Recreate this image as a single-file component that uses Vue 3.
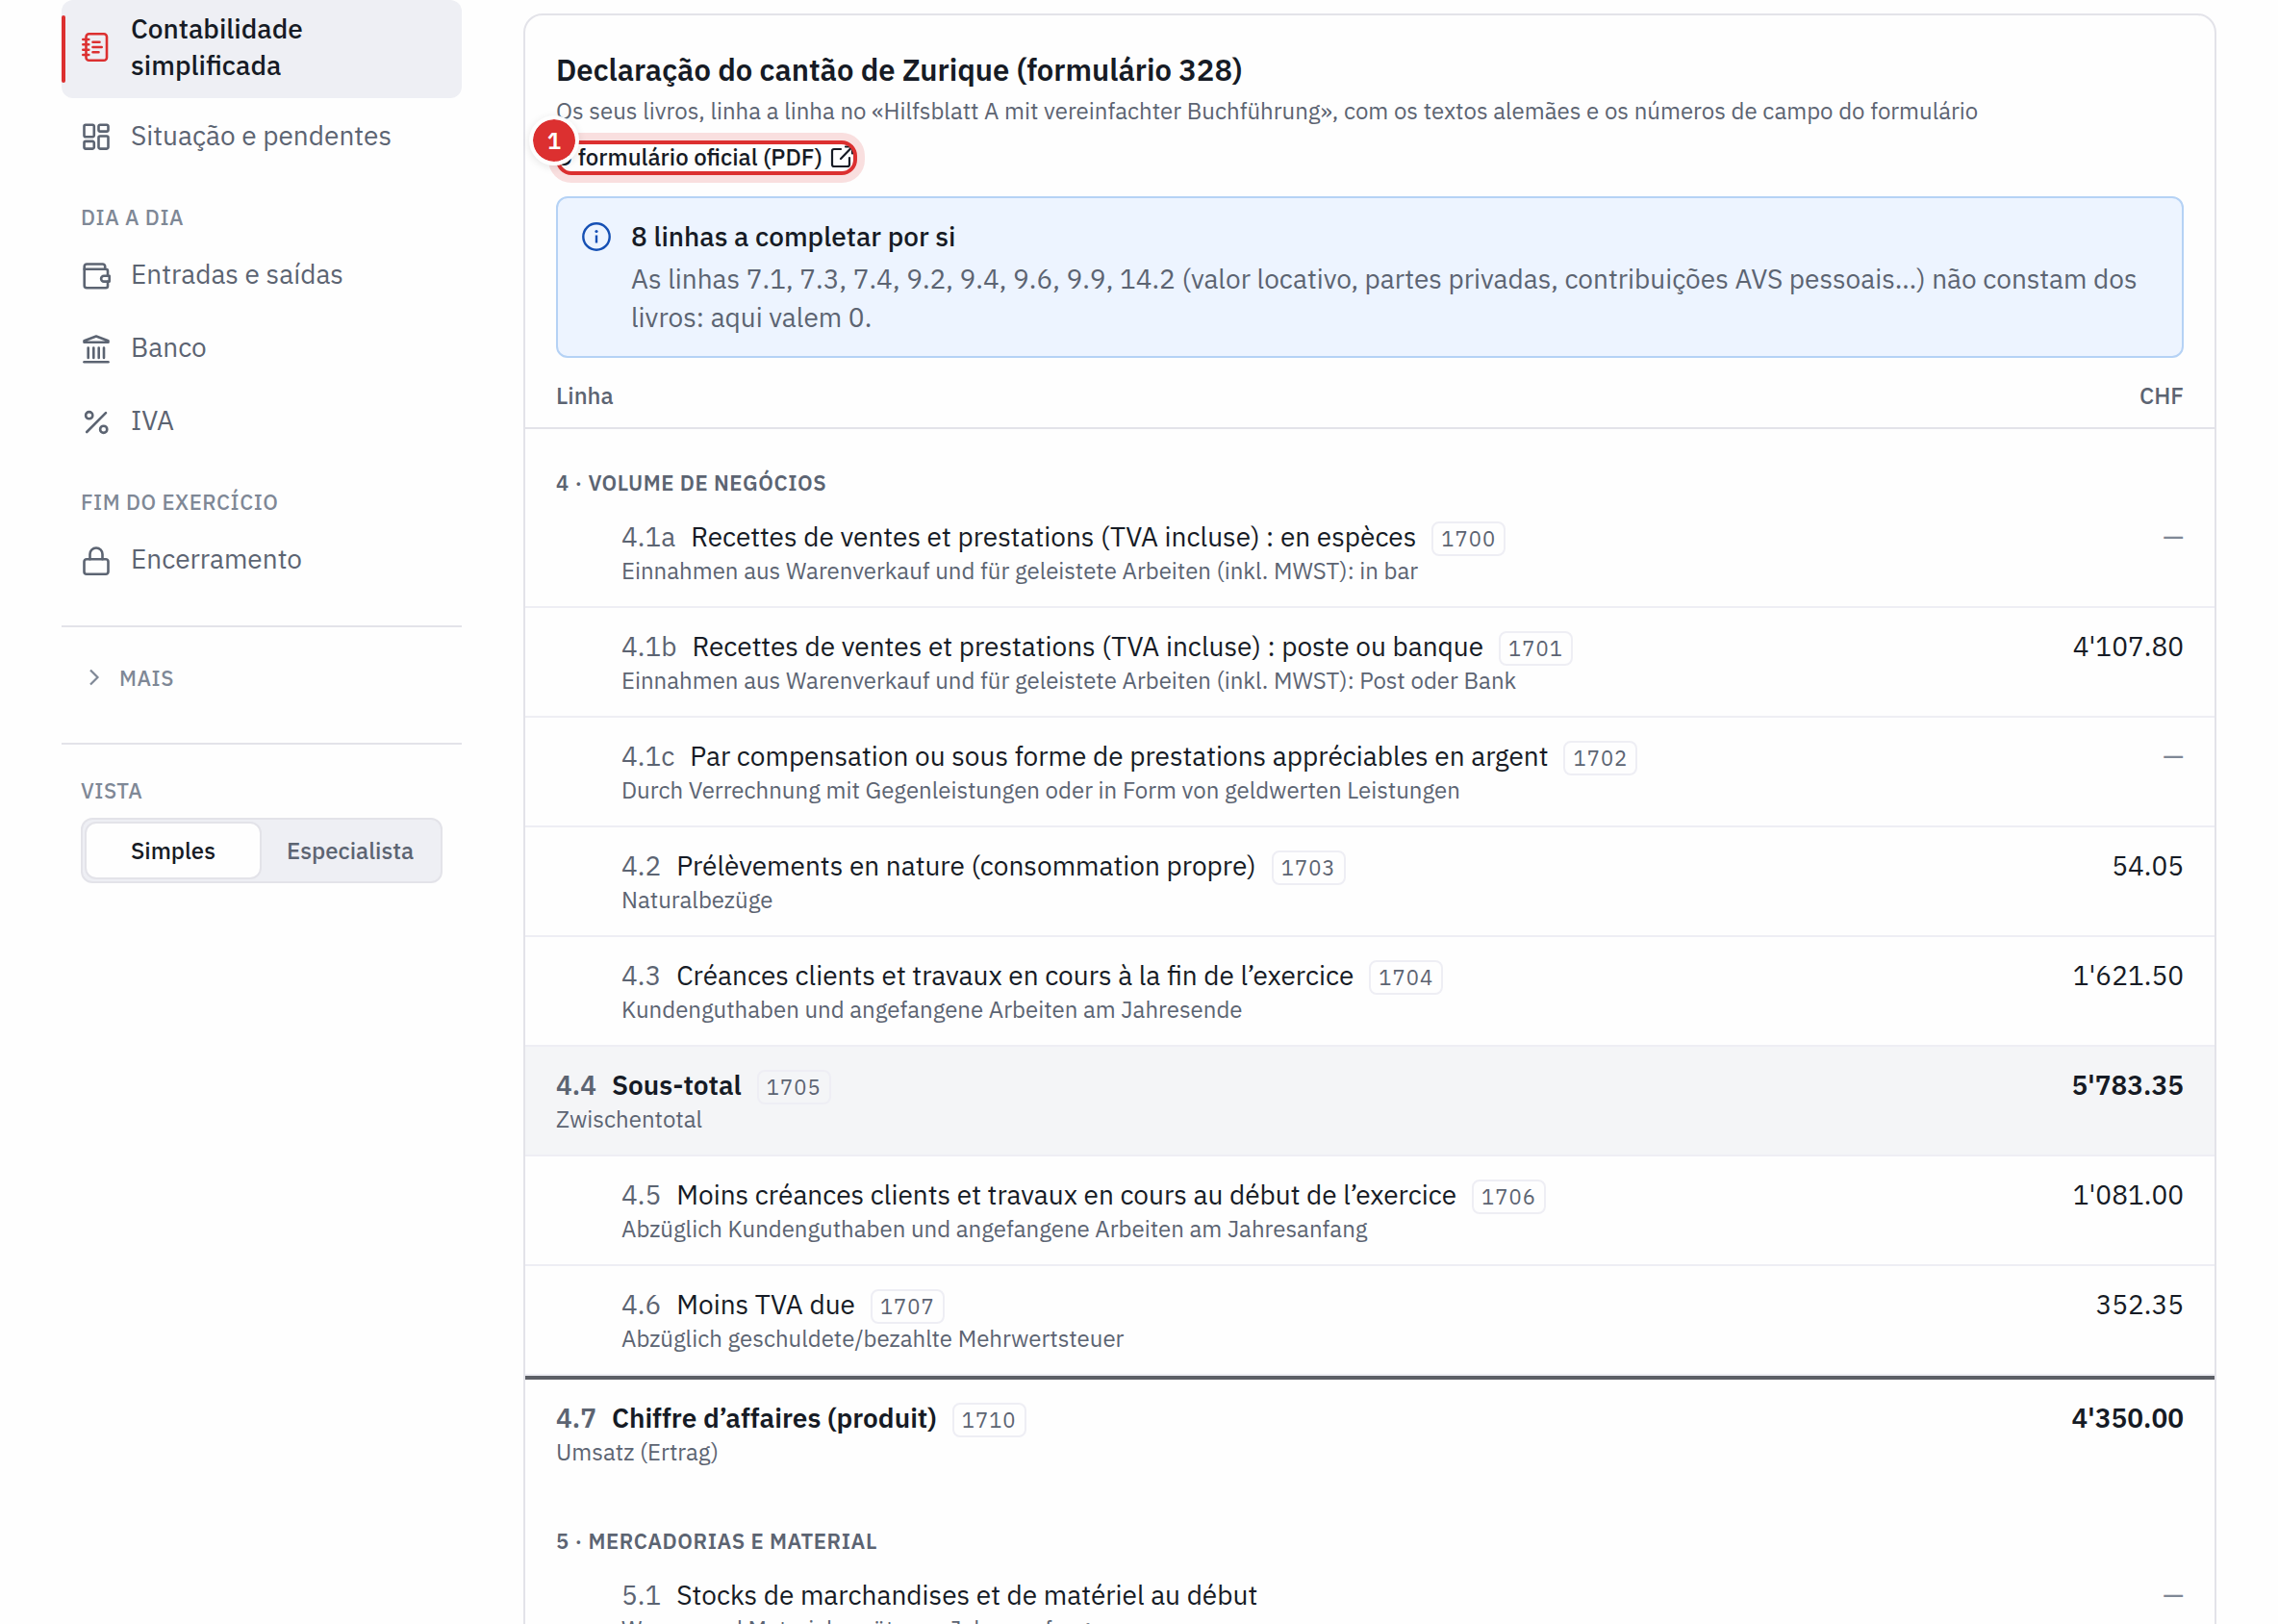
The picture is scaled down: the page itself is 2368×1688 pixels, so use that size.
<template>
  <div class="page">
    <aside class="sidebar">
      <nav class="nav">
        <template v-for="group in groups" :key="group.title">
          <h2 v-if="group.title" class="nav-title">{{ group.title }}</h2>
          <a
            v-for="item in group.items"
            :key="item.label"
            href="#"
            class="nav-item"
            :class="{ active: item.label === current }"
            @click.prevent="current = item.label"
          >
            <svg class="nav-icon" viewBox="0 0 32 32" aria-hidden="true">
              <path v-for="d in icons[item.icon]" :key="d" :d="d" />
            </svg>
            <span class="nav-label">{{ item.label }}</span>
          </a>
        </template>
      </nav>

      <div class="more">
        <button class="more-btn" type="button">
          <svg class="chevron" viewBox="0 0 20 20" aria-hidden="true">
            <path d="M6 2.5 13.5 10 6 17.5" />
          </svg>
          Mais
        </button>
      </div>

      <div class="view">
        <h2 id="view-title" class="view-title">Vista</h2>
        <div class="segmented" role="group" aria-labelledby="view-title">
          <button
            v-for="mode in modes"
            :key="mode"
            type="button"
            class="segment"
            :class="{ selected: mode === view }"
            :aria-pressed="mode === view"
            @click="view = mode"
          >
            {{ mode }}
          </button>
        </div>
      </div>
    </aside>

    <main class="card">
      <header class="card-head">
        <h1 class="title">Declaração do cantão de Zurique (formulário 328)</h1>
        <p class="subtitle">
          Os seus livros, linha a linha no «Hilfsblatt A mit vereinfachter Buchführung», com os textos alemães e os
          números de campo do formulário
        </p>
        <a class="official" href="#">
          O formulário oficial (PDF)
          <svg class="external" viewBox="0 0 24 24" aria-hidden="true">
            <path d="M11 4H4a2 2 0 0 0-2 2v14a2 2 0 0 0 2 2h14a2 2 0 0 0 2-2v-7M11 14 23 1.5M16 1.5h7v7" />
          </svg>
          <span class="ring"></span>
          <span class="step">1</span>
        </a>

        <section class="notice">
          <svg class="info" viewBox="0 0 32 32" aria-hidden="true">
            <circle cx="16" cy="16" r="13.7" />
            <path d="M16 14.5v8" />
            <circle class="dot" cx="16" cy="10.5" r="1.6" />
          </svg>
          <div>
            <h2 class="notice-title">8 linhas a completar por si</h2>
            <p class="notice-text">
              As linhas 7.1, 7.3, 7.4, 9.2, 9.4, 9.6, 9.9, 14.2 (valor locativo, partes privadas, contribuições AVS
              pessoais…) não constam dos livros: aqui valem 0.
            </p>
          </div>
        </section>
      </header>

      <table class="lines">
        <thead>
          <tr>
            <th scope="col">Linha</th>
            <th scope="col" class="amount">CHF</th>
          </tr>
        </thead>
        <tbody v-for="section in sections" :key="section.title">
          <tr class="section">
            <th colspan="2" scope="colgroup">{{ section.title }}</th>
          </tr>
          <tr v-for="line in section.lines" :key="line.no" class="line" :class="line.kind">
            <td>
              <div class="label">
                <span class="no">{{ line.no }}</span>
                <span>{{ line.label }}</span>
                <span v-if="line.code" class="code">{{ line.code }}</span>
              </div>
              <div class="german">{{ line.german }}</div>
            </td>
            <td class="amount" :class="{ empty: !line.amount }">{{ line.amount || "—" }}</td>
          </tr>
        </tbody>
      </table>
    </main>
  </div>
</template>

<script setup>
import { ref } from "vue";

const current = ref("Contabilidade simplificada");
const view = ref("Simples");
const modes = ["Simples", "Especialista"];

const groups = [
  {
    title: "",
    items: [
      { label: "Contabilidade simplificada", icon: "notebook" },
      { label: "Situação e pendentes", icon: "grid" },
    ],
  },
  {
    title: "Dia a dia",
    items: [
      { label: "Entradas e saídas", icon: "wallet" },
      { label: "Banco", icon: "bank" },
      { label: "IVA", icon: "percent" },
    ],
  },
  {
    title: "Fim do exercício",
    items: [{ label: "Encerramento", icon: "lock" }],
  },
];

const icons = {
  notebook: [
    "M8.5 1.2H24a3 3 0 0 1 3 3v21.6a3 3 0 0 1-3 3H8.5a3 3 0 0 1-3-3V4.2a3 3 0 0 1 3-3z",
    "M2.3 7h6M2.3 12.3h6M2.3 17.7h6M2.3 23h6",
    "M12.5 9.7h7M12.5 15h9.2M12.5 20.3h6",
  ],
  grid: [
    "M5 3.8h7.3a1.5 1.5 0 0 1 1.5 1.5v9.4a1.5 1.5 0 0 1-1.5 1.5H5a1.5 1.5 0 0 1-1.5-1.5V5.3A1.5 1.5 0 0 1 5 3.8z",
    "M20 3.8h7a1.5 1.5 0 0 1 1.5 1.5v3.8a1.5 1.5 0 0 1-1.5 1.5h-7a1.5 1.5 0 0 1-1.5-1.5V5.3A1.5 1.5 0 0 1 20 3.8z",
    "M5 20.9h7.3a1.5 1.5 0 0 1 1.5 1.5v4.7a1.5 1.5 0 0 1-1.5 1.5H5a1.5 1.5 0 0 1-1.5-1.5v-4.7a1.5 1.5 0 0 1 1.5-1.5z",
    "M20 15.5h7a1.5 1.5 0 0 1 1.5 1.5v10.1a1.5 1.5 0 0 1-1.5 1.5h-7a1.5 1.5 0 0 1-1.5-1.5V17a1.5 1.5 0 0 1 1.5-1.5z",
  ],
  wallet: [
    "M28 16v-4.3a2 2 0 0 0-2-2H3.7V7a2.5 2.5 0 0 1 2.5-2.5h16.5a2.5 2.5 0 0 1 2.5 2.5v2.7",
    "M3.7 9.7v17a2.5 2.5 0 0 0 2.5 2.5H26a2 2 0 0 0 2-2v-4.3",
    "M24 16.8h5.7v5.8H24a2.9 2.9 0 0 1 0-5.8z",
  ],
  bank: [
    "M3.5 9.7V8.2L16 3.5l12.5 4.7v1.5z",
    "M7.7 15.5V26M13.3 15.5V26M18.7 15.5V26M24 15.5V26",
    "M3.5 30.3h25",
  ],
  percent: [
    "M12.3 9.7a3.6 3.6 0 1 1-7.2 0a3.6 3.6 0 1 1 7.2 0z",
    "M27.3 24.3a3.6 3.6 0 1 1-7.2 0a3.6 3.6 0 1 1 7.2 0z",
    "M6.2 27 26 7.2",
  ],
  lock: [
    "M6 15.2h20a2.5 2.5 0 0 1 2.5 2.5v10.6a2.5 2.5 0 0 1-2.5 2.5H6a2.5 2.5 0 0 1-2.5-2.5V17.7A2.5 2.5 0 0 1 6 15.2z",
    "M9.5 15.2V10a6.5 6.5 0 0 1 13 0v5.2",
  ],
};

const sections = [
  {
    title: "4 · Volume de negócios",
    lines: [
      {
        no: "4.1a",
        label: "Recettes de ventes et prestations (TVA incluse) : en espèces",
        code: "1700",
        german: "Einnahmen aus Warenverkauf und für geleistete Arbeiten (inkl. MWST): in bar",
      },
      {
        no: "4.1b",
        label: "Recettes de ventes et prestations (TVA incluse) : poste ou banque",
        code: "1701",
        german: "Einnahmen aus Warenverkauf und für geleistete Arbeiten (inkl. MWST): Post oder Bank",
        amount: "4'107.80",
      },
      {
        no: "4.1c",
        label: "Par compensation ou sous forme de prestations appréciables en argent",
        code: "1702",
        german: "Durch Verrechnung mit Gegenleistungen oder in Form von geldwerten Leistungen",
      },
      {
        no: "4.2",
        label: "Prélèvements en nature (consommation propre)",
        code: "1703",
        german: "Naturalbezüge",
        amount: "54.05",
      },
      {
        no: "4.3",
        label: "Créances clients et travaux en cours à la fin de l’exercice",
        code: "1704",
        german: "Kundenguthaben und angefangene Arbeiten am Jahresende",
        amount: "1'621.50",
      },
      { no: "4.4", label: "Sous-total", code: "1705", german: "Zwischentotal", amount: "5'783.35", kind: "subtotal" },
      {
        no: "4.5",
        label: "Moins créances clients et travaux en cours au début de l’exercice",
        code: "1706",
        german: "Abzüglich Kundenguthaben und angefangene Arbeiten am Jahresanfang",
        amount: "1'081.00",
      },
      {
        no: "4.6",
        label: "Moins TVA due",
        code: "1707",
        german: "Abzüglich geschuldete/bezahlte Mehrwertsteuer",
        amount: "352.35",
      },
      {
        no: "4.7",
        label: "Chiffre d’affaires (produit)",
        code: "1710",
        german: "Umsatz (Ertrag)",
        amount: "4'350.00",
        kind: "total",
      },
    ],
  },
  {
    title: "5 · Mercadorias e material",
    lines: [
      {
        no: "5.1",
        label: "Stocks de marchandises et de matériel au début",
        german: "Waren- und Materialvorräte am Jahresanfang",
      },
    ],
  },
];
</script>

<style>
body {
  background: #fefefe;
}
</style>

<style scoped>
.page {
  --ink: #161b25;
  --muted: #5c6472;
  --faint: #7f8896;
  --line: #e3e3e9;
  --soft-line: #eeeef4;
  --fill: #eeeff4;
  --red: #dc3030;
  display: flex;
  gap: 64px;
  height: 100vh;
  padding: 0 64px;
  box-sizing: border-box;
  overflow: hidden;
  color: var(--ink);
  font-family: "IBM Plex Sans", Roboto, sans-serif;
  font-size: 28px;
}

h1,
h2,
p {
  margin: 0;
}

button {
  font-family: inherit;
  cursor: pointer;
}

.sidebar {
  flex: 0 0 416px;
}

.nav {
  display: flex;
  flex-direction: column;
  gap: 4px;
  padding-bottom: 32px;
}

.nav-item {
  position: relative;
  display: flex;
  align-items: center;
  gap: 20px;
  min-height: 72px;
  padding: 0 20px;
  box-sizing: border-box;
  border-radius: 12px;
  color: var(--muted);
  line-height: 38px;
  text-decoration: none;
}

.nav-label {
  padding-bottom: 2px;
}

.nav-item.active {
  padding: 11px 20px 13px;
  background: var(--fill);
  color: var(--ink);
  font-weight: 500;
}

.nav-item.active::before {
  content: "";
  position: absolute;
  left: 0;
  top: 16px;
  bottom: 16px;
  width: 4px;
  border-radius: 2px;
  background: var(--red);
}

.nav-icon {
  flex: none;
  width: 32px;
  height: 32px;
  overflow: visible;
  fill: none;
  stroke: currentColor;
  stroke-width: 2.6;
  stroke-linecap: round;
  stroke-linejoin: round;
}

.active .nav-icon {
  color: var(--red);
}

.nav-title,
.view-title {
  color: var(--faint);
  font-size: 22px;
  font-weight: 500;
  letter-spacing: 0.025em;
  line-height: 28px;
  text-transform: uppercase;
}

.nav-title {
  padding: 30px 20px 6px;
}

.more {
  padding: 24px 20px 40px;
  border: solid var(--line);
  border-width: 2px 0;
}

.more-btn {
  display: flex;
  align-items: center;
  gap: 16px;
  width: 100%;
  height: 56px;
  padding: 0 0 0 4px;
  border: 0;
  background: none;
  color: var(--faint);
  font-size: 22px;
  font-weight: 500;
  letter-spacing: 0.025em;
  text-transform: uppercase;
}

.chevron {
  width: 20px;
  height: 20px;
  fill: none;
  stroke: currentColor;
  stroke-width: 2.2;
}

.view {
  padding: 34px 20px;
}

.view-title {
  margin-bottom: 14px;
}

.segmented {
  display: flex;
  padding: 2px;
  border: 2px solid var(--line);
  border-radius: 12px;
  background: var(--fill);
}

.segment {
  flex: 1 1 0;
  height: 60px;
  padding: 0;
  border: 2px solid transparent;
  border-radius: 12px;
  background: none;
  color: var(--muted);
  font-size: 24px;
  font-weight: 500;
}

.segment.selected {
  border-color: var(--line);
  background: #fefefe;
  color: var(--ink);
}

.card {
  flex: 1;
  min-width: 0;
  align-self: flex-start;
  margin-top: 14px;
  border: 2px solid var(--line);
  border-radius: 20px;
}

.card-head {
  padding: 35px 32px 0;
}

.title {
  font-size: 31px;
  font-weight: 600;
  line-height: 44px;
}

.subtitle {
  color: var(--muted);
  font-size: 24px;
  line-height: 40px;
}

.official {
  position: relative;
  display: inline-flex;
  align-items: center;
  gap: 8px;
  margin-top: 11px;
  padding: 0 4px 2px 0;
  color: var(--ink);
  font-size: 24px;
  font-weight: 500;
  line-height: 34px;
  text-decoration: none;
}

.external {
  width: 24px;
  height: 24px;
  fill: none;
  stroke: currentColor;
  stroke-width: 2.2;
  stroke-linecap: round;
  stroke-linejoin: round;
}

.ring {
  position: absolute;
  inset: 0;
  border: 4px solid var(--red);
  border-radius: 16px;
  box-shadow: 0 0 0 8px #dc303026;
}

.step {
  position: absolute;
  top: -26px;
  left: -28px;
  width: 44px;
  height: 44px;
  border: 4px solid #fefefe;
  border-radius: 50%;
  background: var(--red);
  background-clip: padding-box;
  box-shadow: 0 2px 8px #0000001a;
  color: #fff;
  font-size: 24px;
  font-weight: 600;
  line-height: 44px;
  text-align: center;
}

.notice {
  display: flex;
  gap: 20px;
  margin-top: 22px;
  padding: 22px 24px 20px;
  border: 2px solid #b5d2f5;
  border-radius: 12px;
  background: #edf4ff;
}

.info {
  flex: none;
  width: 32px;
  height: 32px;
  margin-top: 2px;
  fill: none;
  stroke: #1650b4;
  stroke-width: 2.4;
}

.info .dot {
  fill: #1650b4;
  stroke: none;
}

.notice-title {
  font-size: 28px;
  font-weight: 500;
  line-height: 36px;
}

.notice-text {
  margin-top: 6px;
  color: var(--muted);
  line-height: 40px;
}

.lines {
  width: 100%;
  border-spacing: 0;
}

.lines th,
.lines td {
  padding: 0 32px;
  text-align: left;
  vertical-align: top;
}

.lines thead th {
  height: 74px;
  padding-top: 6px;
  box-sizing: border-box;
  border-bottom: 2px solid var(--line);
  color: var(--muted);
  font-size: 24px;
  font-weight: 500;
  vertical-align: middle;
}

.lines .section th {
  height: 72px;
  padding-top: 41px;
  box-sizing: border-box;
  color: var(--muted);
  font-size: 22px;
  font-weight: 600;
  letter-spacing: 0.025em;
  line-height: 30px;
  text-transform: uppercase;
}

.lines .line td {
  padding-top: 21px;
  padding-bottom: 21px;
  border-bottom: 2px solid var(--soft-line);
  line-height: 38px;
}

.lines .line td:first-child {
  padding-left: 100px;
}

.lines .subtotal td:first-child,
.lines .total td:first-child {
  padding-left: 32px;
}

.lines .subtotal td {
  background: #f4f5f7;
}

.lines .total td {
  border-top: 4px solid #5c5f66;
  border-bottom: 0;
}

.subtotal,
.total {
  font-weight: 600;
}

.label {
  display: flex;
  align-items: center;
  gap: 16px;
  height: 38px;
}

.no {
  color: var(--muted);
}

.code {
  padding: 0 8px;
  margin-top: 4px;
  border: 2px solid var(--soft-line);
  border-radius: 8px;
  color: var(--muted);
  font-size: 22px;
  font-weight: 400;
  letter-spacing: 1px;
  line-height: 32px;
}

.german {
  color: var(--muted);
  font-size: 24px;
  font-weight: 400;
  line-height: 32px;
}

.lines .amount {
  text-align: right;
  white-space: nowrap;
}

.lines .empty {
  color: var(--faint);
}
</style>
